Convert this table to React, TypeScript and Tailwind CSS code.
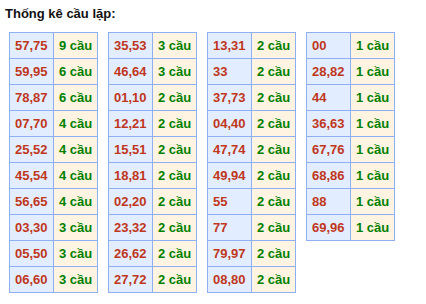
const tables: [string, number][][] = [
  [
    ['57,75', 9], ['59,95', 6], ['78,87', 6], ['07,70', 4], ['25,52', 4],
    ['45,54', 4], ['56,65', 4], ['03,30', 3], ['05,50', 3], ['06,60', 3],
  ],
  [
    ['35,53', 3], ['46,64', 3], ['01,10', 2], ['12,21', 2], ['15,51', 2],
    ['18,81', 2], ['02,20', 2], ['23,32', 2], ['26,62', 2], ['27,72', 2],
  ],
  [
    ['13,31', 2], ['33', 2], ['37,73', 2], ['04,40', 2], ['47,74', 2],
    ['49,94', 2], ['55', 2], ['77', 2], ['79,97', 2], ['08,80', 2],
  ],
  [
    ['00', 1], ['28,82', 1], ['44', 1], ['36,63', 1], ['67,76', 1],
    ['68,86', 1], ['88', 1], ['69,96', 1],
  ],
];

function CauTable({ rows }: { rows: [string, number][] }) {
  return (
    <div className="grid grid-cols-[44px_44px] self-start border-l border-t border-[#8eb0f2]">
      {rows.map(([pair, count]) => (
        <div key={pair} className="contents">
          <div className="h-[26px] flex items-center pl-[5px] bg-[#e2eeff] border-r border-b border-[#8eb0f2] text-[#c0361c]">
            {pair}
          </div>
          <div className="h-[26px] flex items-center pl-[5px] bg-[#fff4e1] border-r border-b border-[#8eb0f2] text-[#008000]">
            {count} cầu
          </div>
        </div>
      ))}
    </div>
  );
}

export default function App() {
  return (
    <div
      className="bg-white w-[426px] h-[304px] pl-[5px] pt-[6px] font-bold text-[13px]"
      style={{ fontFamily: '"Liberation Sans", Arial, sans-serif' }}
    >
      <div className="text-[#111] leading-[15px]">Thống kê cầu lặp:</div>
      <div className="flex gap-[10px] ml-[4px] mt-[11px]">
        {tables.map((rows, i) => (
          <CauTable key={i} rows={rows} />
        ))}
      </div>
    </div>
  );
}
